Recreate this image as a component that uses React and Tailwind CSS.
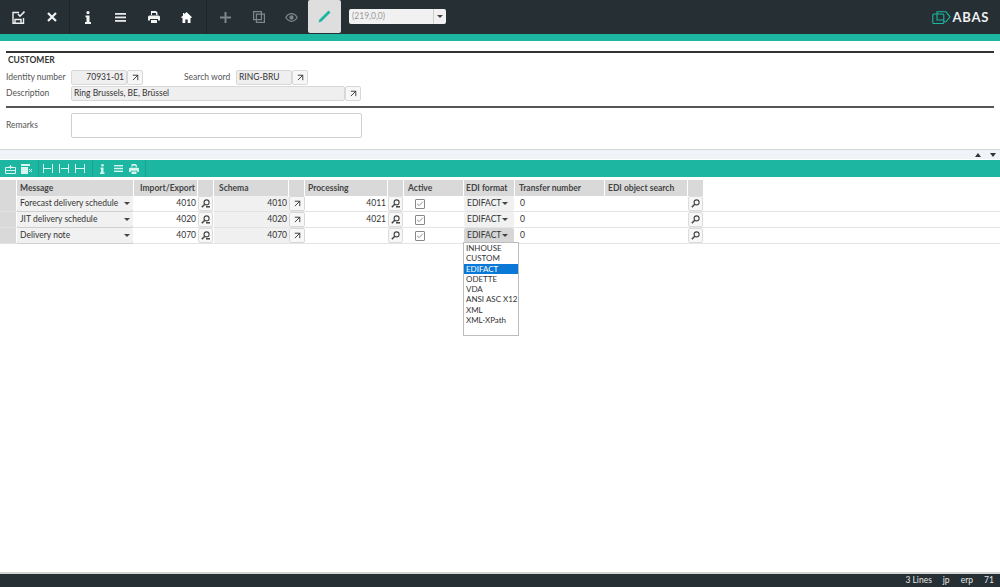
import { ArrowUpRight, Check } from 'lucide-react';

// abas ERP customer screen: EDI message table with an open format dropdown

const FONT = "font-['Lato','Liberation_Sans',sans-serif]";

const COLS = 'grid grid-cols-[17px_117px_64px_16px_75px_16px_83px_16px_60px_51px_90px_83px_16px]';

const ROWS = [
  { message: 'Forecast delivery schedule', io: '4010', schema: '4010', processing: '4011', keyed: true },
  { message: 'JIT delivery schedule', io: '4020', schema: '4020', processing: '4021', keyed: true },
  { message: 'Delivery note', io: '4070', schema: '4070', processing: '', keyed: false },
];

const FORMATS = ['INHOUSE', 'CUSTOM', 'EDIFACT', 'ODETTE', 'VDA', 'ANSI ASC X12', 'XML', 'XML-XPath'];

function SaveIcon() {
  return (
    <svg width="13" height="13" viewBox="0 0 13 13" fill="none" stroke="#eef1f1" strokeWidth="1.4">
      <path d="M7 1.500H1v10.800h10.500V7" />
      <path d="M3 12V8.500h6V12" />
      <path d="M6 3l2 2.200L12.500.5" strokeWidth="1.600" />
    </svg>
  );
}

function PrinterIcon({ size = 12, color = '#f2f4f4' }) {
  return (
    <svg width={size} height={size} viewBox="0 0 12 12" fill={color}>
      <path d="M3 0h5l1.500 1.500V4H8V2H4v2H3z" />
      <path d="M1.500 4.500h9A1.500 1.500 0 0 1 12 6v3.500h-2V8H2v1.500H0V6a1.500 1.500 0 0 1 1.500-1.500z" />
      <path d="M3 9h6v3H3z" />
    </svg>
  );
}

function HomeIcon() {
  return (
    <svg width="11" height="11" viewBox="0 0 11 11" fill="#fff">
      <path d="M5.500 0L11 5.300l-.8.800-.7-.6V11H6.700V7.500H4.300V11H1.500V5.500l-.7.600L0 5.300 2 3.400V1h1.300v1.200z" />
    </svg>
  );
}

function ToolButton({ children }) {
  return <div className="w-[33px] h-[34px] flex items-center justify-center">{children}</div>;
}

function Separator({ wide }) {
  return <div className={`${wide ? 'w-[6px]' : 'w-[3px]'} h-[34px] flex justify-center`}><div className="w-px bg-[#1d2528]" /></div>;
}

function TopBar() {
  return (
    <div className="h-[34px] bg-[#262f33] flex items-center pl-[2px] pr-[11px]">
      <ToolButton><SaveIcon /></ToolButton>
      <ToolButton>
        <svg width="10" height="10" viewBox="0 0 10 10" stroke="#f2f4f4" strokeWidth="2.200"><path d="M1 1l8 8M9 1L1 9" /></svg>
      </ToolButton>
      <Separator />
      <ToolButton>
        <svg width="6" height="13" viewBox="0 0 6 13" fill="#f2f4f4"><circle cx="3" cy="1.600" r="1.600" /><path d="M.5 4.500h4v6.500H6v2H0v-2h1.500V6.300h-1z" /></svg>
      </ToolButton>
      <ToolButton>
        <svg width="11" height="9" viewBox="0 0 11 9" fill="#e6e9e9"><rect width="11" height="1.800" /><rect y="3.500" width="11" height="1.800" /><rect y="7" width="11" height="1.800" /></svg>
      </ToolButton>
      <ToolButton><PrinterIcon /></ToolButton>
      <ToolButton><HomeIcon /></ToolButton>
      <Separator wide />
      <ToolButton>
        <svg width="11" height="11" viewBox="0 0 11 11" fill="#7d8689"><rect x="4.500" width="2" height="11" /><rect y="4.500" width="11" height="2" /></svg>
      </ToolButton>
      <ToolButton>
        <svg width="12" height="12" viewBox="0 0 12 12" fill="none" stroke="#7d8689" strokeWidth="1.200"><path d="M.6.6h7.800v2.600H11.400v8.200H3.400V8.600H.6z" /><path d="M3.400 3.200h5v5.400h-5z" /></svg>
      </ToolButton>
      <ToolButton>
        <svg width="13" height="9" viewBox="0 0 13 9" fill="none" stroke="#7d8689" strokeWidth="1.300"><path d="M.8 4.500C2.500 1.800 4.500.7 6.500.7s4 1.100 5.700 3.800C10.500 7.200 8.500 8.300 6.500 8.300S2.500 7.200.8 4.500z" /><circle cx="6.500" cy="4.500" r="1.500" fill="#7d8689" /></svg>
      </ToolButton>
      <div className="w-[33px] h-[33px] self-start bg-[#dedede] rounded-[2px] flex items-center justify-center">
        <svg width="13" height="13" viewBox="0 0 13 13"><path d="M.5 12.500l1-3L10.500.5l2 2-9 9z" fill="#1db6a0" /></svg>
      </div>
      <div className="ml-2 w-[97px] h-[15px] mt-[-1px] bg-[#f1f1f1] rounded-[2px] flex items-center">
        <span className="flex-1 pl-[3px] text-[#9a9a9a]">(219,0,0)</span>
        <div className="w-[13px] h-full border-l border-[#cfcfcf] flex items-center justify-center">
          <div className="w-0 h-0 border-x-[3px] border-x-transparent border-t-[3px] border-t-[#444]" />
        </div>
      </div>
      <div className="ml-auto flex items-center gap-[2px]">
        <svg width="19" height="13" viewBox="0 0 19 13" fill="none" stroke="#1db6a0" strokeWidth="1.100">
          <path d="M5 3V.8h9l4 5-4 5h-2" />
          <rect x=".8" y="3" width="11" height="9.500" rx="1" />
          <path d="M5 3v6h7" />
        </svg>
        <span className="text-[13px] font-bold tracking-[0.7px] text-[#eef1f1]">ABAS</span>
      </div>
    </div>
  );
}

function LinkButton() {
  return (
    <div className="w-[16px] h-[15px] bg-[#f7f7f7] border border-[#d8d8d8] rounded-[2px] flex items-center justify-center">
      <ArrowUpRight size={11} strokeWidth={2} color="#333" />
    </div>
  );
}

function ReadField({ className, children }) {
  return (
    <div className={`h-[15px] bg-[#efefef] border border-[#d8d8d8] rounded-[2px] flex items-center px-[2px] text-[#333] ${className}`}>
      {children}
    </div>
  );
}

function Head() {
  return (
    <div className="mx-[6px] mt-[10px] h-[98px] flex flex-col">
      <div className="h-[2px] bg-[#333]" />
      <div className="pl-[2px] mt-[1px] h-[12px] leading-[12px] font-bold text-[#333]">CUSTOMER</div>
      <div className="mt-[4px] flex flex-col gap-[1px] text-[#555]">
        <div className="flex items-center h-[15px]">
          <span className="w-[65px]">Identity number</span>
          <ReadField className="w-[56px] justify-end">70931-01</ReadField>
          <LinkButton />
          <span className="ml-[41px] w-[52px]">Search word</span>
          <ReadField className="w-[56px]">RING-BRU</ReadField>
          <LinkButton />
        </div>
        <div className="flex items-center h-[15px]">
          <span className="w-[65px]">Description</span>
          <ReadField className="w-[274px]">Ring Brussels, BE, Brüssel</ReadField>
          <LinkButton />
        </div>
      </div>
      <div className="mt-[5px] h-[2px] bg-[#555]" />
      <div className="mt-[5px] flex items-center text-[#555]">
        <span className="w-[65px]">Remarks</span>
        <div className="w-[291px] h-[25px] bg-white border border-[#cfcfcf] rounded-[2px]" />
      </div>
    </div>
  );
}

function SectionBar() {
  return (
    <div className="h-[10px] bg-[#f0f3f7] border-t border-[#d4d4d4] flex items-center justify-end gap-[9px] pr-[4px]">
      <div className="w-0 h-0 border-x-[3px] border-x-transparent border-b-[4px] border-b-[#333]" />
      <div className="w-0 h-0 border-x-[3px] border-x-transparent border-t-[4px] border-t-[#333]" />
    </div>
  );
}

function BarCell({ children }) {
  return <div className="w-[16px] h-full flex items-center justify-center">{children}</div>;
}

function BarSep({ ml }) {
  return <div className={`${ml} mr-px w-px h-full bg-[#18a18e]`} />;
}

function TableToolbar() {
  return (
    <div className="h-[17px] bg-[#1db6a0] mt-[1px] flex items-center pl-[2px] text-[#d8f5ef]">
      <BarCell>
        <svg width="11" height="10" viewBox="0 0 11 10" fill="none" stroke="currentColor"><path d="M.5 3.500h10v6H.5zM.5 6.500h10M5.500 1v4M3.500 3h4" /></svg>
      </BarCell>
      <BarCell>
        <svg width="11" height="10" viewBox="0 0 11 10" fill="currentColor"><path d="M0 0h9v2H0zM0 3h7v7H0z" /><path d="M8 5l3 3M11 5L8 8" stroke="currentColor" /></svg>
      </BarCell>
      <BarSep ml="ml-[4px]" />
      <BarCell>
        <svg width="10" height="9" viewBox="0 0 10 9" fill="none" stroke="currentColor"><path d="M.5 0v9M9.500 0v9M1 4.500h7" /></svg>
      </BarCell>
      <BarCell>
        <svg width="10" height="9" viewBox="0 0 10 9" fill="none" stroke="currentColor"><path d="M.5 0v9M9.500 0v9M2 4.500h7" /></svg>
      </BarCell>
      <BarCell>
        <svg width="10" height="9" viewBox="0 0 10 9" fill="none" stroke="currentColor"><path d="M.5 0v9M9.500 0v9M1 4.500h8" /></svg>
      </BarCell>
      <BarSep ml="ml-[4px]" />
      <BarCell>
        <svg width="5" height="10" viewBox="0 0 5 10" fill="currentColor"><circle cx="2.500" cy="1.300" r="1.300" /><path d="M.5 3.500h3v5h1V10H0V8.500h1V5H.5z" /></svg>
      </BarCell>
      <BarCell>
        <svg width="9" height="7" viewBox="0 0 9 7" fill="currentColor"><rect width="9" height="1.400" /><rect y="2.800" width="9" height="1.400" /><rect y="5.600" width="9" height="1.400" /></svg>
      </BarCell>
      <BarCell><PrinterIcon size={10} color="#d8f5ef" /></BarCell>
      <BarSep ml="ml-[3px]" />
    </div>
  );
}

function HeadCell({ children, right }) {
  return (
    <div className={`h-[16px] bg-[#d9d9d9] mr-px flex items-center font-bold text-[#444] whitespace-nowrap ${right ? 'justify-end pr-[2px]' : 'pl-[3px]'}`}>
      {children}
    </div>
  );
}

function TableHeader() {
  return (
    <div className={COLS}>
      <HeadCell />
      <HeadCell>Message</HeadCell>
      <HeadCell right>Import/Export</HeadCell>
      <HeadCell />
      <HeadCell><span className="pl-[2px]">Schema</span></HeadCell>
      <HeadCell />
      <HeadCell>Processing</HeadCell>
      <HeadCell />
      <HeadCell><span className="pl-[1px]">Active</span></HeadCell>
      <HeadCell><span className="-ml-[1px]">EDI format</span></HeadCell>
      <HeadCell><span className="pl-[1px]">Transfer number</span></HeadCell>
      <HeadCell>EDI object search</HeadCell>
      <HeadCell />
    </div>
  );
}

function Lookup({ keyed }) {
  return (
    <div className="w-[15px] h-[15px] bg-[#f7f7f7] border border-[#dcdcdc] rounded-[2px] flex items-center justify-center">
      <svg width="9" height="9" viewBox="0 0 9 9" fill="none" stroke="#444" strokeWidth="1.100">
        <circle cx="5.600" cy="3.400" r="2.500" />
        <path d="M3.800 5.200L.8 8.200" strokeWidth="1.500" />
        {keyed && <path d="M5 7.800h4" strokeWidth="1.500" />}
      </svg>
    </div>
  );
}

function Caret() {
  return <div className="w-0 h-0 border-x-[3px] border-x-transparent border-t-[3px] border-t-[#444]" />;
}

function TableRow({ row, open }) {
  return (
    <div className={`${COLS} h-[16px] border-b border-[#e4e4e4] text-[#333] whitespace-nowrap`}>
      <div className="bg-[#d9d9d9] mr-px" />
      <div className="h-[15px] mr-px bg-[#f1f1f1] rounded-[2px] flex items-center justify-between pl-[3px] pr-[3px] shadow-[0_1px_0_#cfcfcf]">
        {row.message}
        <Caret />
      </div>
      <div className="flex items-center justify-end pr-[2px]">{row.io}</div>
      <Lookup keyed />
      <div className="flex items-center justify-end pr-[2px] bg-[#f0f0f0]">{row.schema}</div>
      <LinkButton />
      <div className="flex items-center justify-end pr-[2px]">{row.processing}</div>
      <Lookup keyed={row.keyed} />
      <div className="flex items-center justify-center pr-[28px]">
        <div className="w-[10px] h-[10px] bg-white border border-[#888] rounded-[1px] flex items-center justify-center">
          <Check size={8} strokeWidth={2} color="#555" />
        </div>
      </div>
      <div className={`h-[15px] mr-[1px] rounded-[2px] flex items-center justify-between pl-[3px] pr-[6px] ${open ? 'bg-[#d6d6d6]' : 'bg-[#f1f1f1]'}`}>
        EDIFACT
        <Caret />
      </div>
      <div className="flex items-center pl-[5px]">0</div>
      <div />
      <Lookup />
    </div>
  );
}

function FormatMenu() {
  return (
    <div className="absolute left-[463px] top-[65px] w-[56px] h-[94px] bg-white border border-[#bdbdbd] z-10 whitespace-nowrap text-[8px]">
      {FORMATS.map((f) => (
        <div
          key={f}
          className={`h-[10.300px] leading-[10.300px] pl-[2px] ${f === 'EDIFACT' ? 'bg-[#0a78d7] text-white' : 'text-[#333]'}`}
        >
          {f}
        </div>
      ))}
    </div>
  );
}

function StatusBar() {
  return (
    <div className="h-[15px] bg-[#262f33] border-t-[2px] border-[#d4d4d4] flex items-center justify-end text-[#e4e6e6]">
      <span>3 Lines</span>
      <span className="ml-[11px]">jp</span>
      <span className="ml-[11px]">erp</span>
      <span className="ml-[11px] mr-[4px] w-[12px]">71</span>
    </div>
  );
}

export default function App() {
  return (
    <div className={`${FONT} w-[1000px] h-[587px] bg-white flex flex-col overflow-hidden text-[8.500px] leading-none`}>
      <TopBar />
      <div className="h-[7px] bg-[#1db6a0]" />
      <Head />
      <SectionBar />
      <TableToolbar />
      <div className="relative flex-1 pt-[3px]">
        <TableHeader />
        {ROWS.map((row, i) => (
          <TableRow key={row.message} row={row} open={i === 2} />
        ))}
        <FormatMenu />
      </div>
      <StatusBar />
    </div>
  );
}
